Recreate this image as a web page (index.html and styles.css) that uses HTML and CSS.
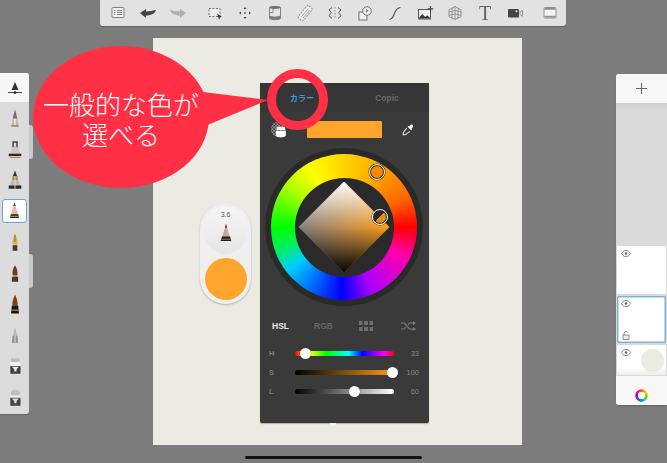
FILE: index.html
```html
<!DOCTYPE html>
<html lang="ja">
<head>
<meta charset="utf-8">
<title>カラー</title>
<link rel="stylesheet" href="styles.css">
</head>
<body>
<div class="stage">
  <div class="paper"></div>

  <header class="topbar">
    <div class="tgroup">
      <svg class="ti" viewBox="0 0 20 20"><rect x="4" y="4.500" width="12" height="10" rx="1" fill="#f4f4f4" stroke="#777"/><path d="M6 7.500h1.500M6 9.500h1.500M6 11.500h1.500M9 7.500h5M9 9.500h5M9 11.500h5" stroke="#777"/></svg>
      <svg class="ti" viewBox="0 0 20 20"><path d="M2 10 8 6v2.500c3.500 0 6.500-.4 10-1.700-.8 3.600-4.500 5.700-10 5.800V15z" fill="#333"/></svg>
      <svg class="ti" viewBox="0 0 20 20"><path d="M18 10 12 6v2.500c-3.500 0-6.500-.4-10-1.700.8 3.600 4.500 5.700 10 5.800V15z" fill="#aaa"/></svg>
    </div>
    <div class="tgroup">
      <svg class="ti" viewBox="0 0 20 20"><rect x="4" y="5.500" width="11" height="8" fill="#eee" stroke="#666" stroke-dasharray="2 1.500"/><path d="M12 10.500l5 3.500-2.200.6-.6 2.400z" fill="#222"/></svg>
      <svg class="ti" viewBox="0 0 20 20"><path d="M10 4l1.500 2h-3zM10 16l1.500-2h-3zM4 10l2-1.500v3zM16 10l-2-1.500v3z" fill="#333"/><circle cx="10" cy="10" r=".9" fill="#555"/></svg>
      <svg class="ti" viewBox="0 0 20 20"><path d="M4.500 4.500h11v11c-3 1.700-8 1.700-11 0z" fill="#e4e4e4" stroke="#777"/><path d="M4.500 12.500c3 1.500 8 1.500 11 0v3c-3 1.700-8 1.700-11 0z" fill="#77706e"/><path d="M8 5v4.500H4.500" fill="#fff" stroke="#777"/><ellipse cx="10" cy="4.500" rx="5.500" ry="1.400" fill="#666"/></svg>
      <svg class="ti" viewBox="0 0 20 20"><rect x="7" y="2" width="6.500" height="16" rx="1.500" transform="rotate(40 10 10)" fill="#f2f2f2" stroke="#888" stroke-dasharray="2 1"/><path d="M6.500 13.500 13.500 5.500M8 15l7-8" stroke="#999"/></svg>
      <svg class="ti" viewBox="0 0 20 20"><path d="M10 4v12" stroke="#888" stroke-dasharray="1.500 1.500"/><path d="M7 4.500 4 7l2.300 2.800L4 12.800 7 15.500M13 4.500 16 7l-2.300 2.800 2.300 3 -3 2.700" fill="none" stroke="#444"/></svg>
      <svg class="ti" viewBox="0 0 20 20"><rect x="4" y="9" width="8" height="8" fill="#f2f2f2" stroke="#666"/><circle cx="12" cy="8" r="4.300" fill="#eee" stroke="#666"/><path d="M11 5.800l2.700 2-2.700 2z" fill="#777"/></svg>
      <svg class="ti" viewBox="0 0 20 20"><path d="M4.500 16.500C8 16 8.500 12.500 9.800 9.500 11 6.500 12.500 5 15.500 4.500" fill="none" stroke="#444" stroke-width="1.200"/></svg>
      <svg class="ti" viewBox="0 0 20 20"><rect x="3.500" y="6.500" width="12" height="9.500" fill="#f2f2f2" stroke="#444"/><path d="M3.500 15.500l3.700-4.500 3 3 2-1.800 3.300 3.300z" fill="#222"/><path d="M15.500 3v5.500M12.800 5.800h5.400" stroke="#333" stroke-width="1.200"/></svg>
      <svg class="ti" viewBox="0 0 20 20"><path d="M10 3.500 4 6.800v6.900L10 16.500l6-2.800V6.800z" fill="#e8e8e8" stroke="#888"/><path d="M7 5.200v10M10 3.500v13M13 5.200v10M4 9 10 7.500l6 1.500M4 12.300 10 11l6 1.300" fill="none" stroke="#777" stroke-width=".8"/></svg>
      <span class="ti ti-t">T</span>
      <svg class="ti" viewBox="0 0 20 20"><rect x="3" y="6" width="11" height="8.500" rx="1" fill="#333"/><circle cx="11.500" cy="8.200" r="1" fill="#eee"/><path d="M15 9l2.500-1.800v6L15 11.500z" fill="#f2f2f2" stroke="#777" stroke-width=".8"/></svg>
    </div>
    <div class="tgroup tlast">
      <svg class="ti" viewBox="0 0 20 20"><rect x="4" y="4.500" width="12" height="10.500" rx="1" fill="#f7f7f7" stroke="#888"/><path d="M4.500 5h11v1.800h-11zM4.500 12.700h11v1.800h-11z" fill="#888"/></svg>
    </div>
  </header>

  <aside class="tools">
    <div class="tool-top">
      <svg class="tool-s" viewBox="0 0 20 20"><path d="M10 4 13.500 12h-7z" fill="#333"/><path d="M3 14.500h14" stroke="#444"/><circle cx="10" cy="14.500" r="1.500" fill="#333"/></svg>
    </div>
    <div class="tool">
      <svg class="nib" viewBox="0 0 20 28"><path d="M10 3 7 15h6z" fill="#6f6f6f"/><path d="M7 15 5.500 24h9L13 15z" fill="#b9b9b9"/><path d="M10 15v9" stroke="#e8e8e8" stroke-width="2"/><path d="M5.500 23h9v2h-9z" fill="#b08a3e"/></svg>
    </div>
    <div class="tool">
      <svg class="nib" viewBox="0 0 20 28"><path d="M7.500 5h5v7h-5z" fill="none" stroke="#444" stroke-width="2"/><path d="M7 11h6l5 11H2z" fill="#c9c9c9"/><path d="M2 20h16v3H2z" fill="#2a2a2a"/><path d="M3 24h14v1.500H3z" fill="#b08a3e"/></svg>
    </div>
    <div class="tool">
      <svg class="nib" viewBox="0 0 20 28"><path d="M10 2 7 10h6z" fill="#333"/><path d="M7 9h6l1 7H6z" fill="#b08a3e"/><path d="M6 14h8l4 10H2z" fill="#bdbdbd"/><path d="M2 21h16v4H2z" fill="#2a2a2a"/><path d="M10 9v16" stroke="#e5e5e5"/></svg>
    </div>
    <div class="tool tool-on">
      <div class="tool-sel">
        <svg class="nib" viewBox="0 0 20 28"><path d="M10 3 5 20h10z" fill="#e8b9a8"/><path d="M10 3 8.500 8h3z" fill="#333"/><path d="M5 19h10l1 5H4z" fill="#222"/><path d="M4 21h12v1.500H4z" fill="#b08a3e"/></svg>
      </div>
    </div>
    <div class="tool">
      <svg class="nib" viewBox="0 0 20 28"><path d="M10 3 6.500 13 8 18h4l1.500-5z" fill="#d9b25c"/><path d="M10 5v9" stroke="#7a5a20"/><path d="M7 18h6v7H7z" fill="#3a3a3a"/></svg>
    </div>
    <div class="tool">
      <svg class="nib" viewBox="0 0 20 28"><path d="M10 4C7 8 6.500 13 7 17h6c.5-4 0-9-3-13z" fill="#6b3d20"/><path d="M7 17h6v2H7z" fill="#b08a3e"/><path d="M6 19h8v6H6z" fill="#3a3a3a"/></svg>
    </div>
    <div class="tool">
      <svg class="nib" viewBox="0 0 20 28"><path d="M10 2C7.500 7 6.500 12 6.500 16h7c0-4-1-9-3.500-14z" fill="#7a3d18"/><path d="M6 16h8l1 10H5z" fill="#161616"/><path d="M5.500 21h9v1.500h-9z" fill="#b08a3e"/></svg>
    </div>
    <div class="tool">
      <svg class="nib" viewBox="0 0 20 28"><path d="M10 4 7 15h6z" fill="#bbb"/><path d="M7 15h6l1 9H6z" fill="#8c8c8c"/><path d="M8.500 15h3v9h-3z" fill="#b4b4b4"/></svg>
    </div>
    <div class="tool">
      <svg class="nib" viewBox="0 0 20 28"><path d="M5 4h11v5H5z" fill="#bdbdbd"/><path d="M4 9h13v5H4z" fill="#f2f2f2"/><path d="M4 14h13v10H4z" fill="#3f3f3f"/><path d="M6 15h9l-3 3v3H9v-3z" fill="#eee"/></svg>
    </div>
    <div class="tool">
      <svg class="nib" viewBox="0 0 20 28"><path d="M5 7c2-3 9-3 11 0v5H5z" fill="#bdbdbd"/><path d="M4 12h13v3H4z" fill="#eee"/><path d="M4 15h13v10H4z" fill="#454545"/><path d="M6 16h9l-3 3v3H9v-3z" fill="#ddd"/></svg>
    </div>
  </aside>
  <div class="tab tab-a"></div>
  <div class="tab tab-b"></div>

  <div class="pill">
    <div class="pill-top">
      <span class="pill-size">3.6</span>
      <svg class="pill-nib" viewBox="0 0 18 22"><path d="M9 1 4.500 16h9z" fill="#c9a696"/><path d="M9 1 7.800 5h2.400z" fill="#333"/><path d="M4.500 15h9l1.500 5H3z" fill="#1e1e1e"/><path d="M3.500 17.500h11v1h-11z" fill="#a5853f"/></svg>
    </div>
    <div class="pill-colour"></div>
  </div>

  <section class="panel">
    <div class="tabs">
      <span class="tab-label tab-on">カラー</span>
      <span class="tab-label">Copic</span>
    </div>
    <div class="swatch-row">
      <svg class="opacity" viewBox="0 0 24 24">
        <defs><pattern id="chk" width="4" height="4" patternUnits="userSpaceOnUse"><rect width="4" height="4" fill="#3a3a3a"/><rect width="2" height="2" fill="#999"/><rect x="2" y="2" width="2" height="2" fill="#999"/></pattern></defs>
        <circle cx="10" cy="11" r="9" fill="url(#chk)"/>
        <path d="M8 8h10v4H8z" fill="#eee"/><path d="M7 13h12v6c-2 2.500-10 2.500-12 0z" fill="#fff"/>
      </svg>
      <div class="swatch"></div>
      <svg class="dropper" viewBox="0 0 16 16"><path d="M10.500 2.500c1-1 2.500-1 3 0s.5 1.800-.5 2.800l-1 1 .8.800-1.300 1.300-4-4 1.300-1.300.800.800z" fill="#fff"/><path d="M6.500 6 2.500 11v2.500H5L10 9.500" fill="none" stroke="#eee" stroke-width="1.200"/></svg>
    </div>
    <div class="wheel">
      <div class="ring">
        <div class="hole"><div class="diamond"></div></div>
      </div>
      <span class="handle handle-hue"></span>
      <span class="handle handle-sl"></span>
    </div>
    <div class="modes">
      <span class="mode mode-on">HSL</span>
      <span class="mode">RGB</span>
      <svg class="mode-i" viewBox="0 0 14 10"><path d="M0 0h3.500v4H0zM5 0h4v4H5zM10.500 0H14v4h-3.500zM0 6h3.500v4H0zM5 6h4v4H5zM10.500 6H14v4h-3.500z" fill="#6e6e6e"/></svg>
      <svg class="mode-i mode-i2" viewBox="0 0 15 10"><path d="M0 2h3.500l5 6H12M0 8h3.500l1.500-2M7 4l1.500-2H12" fill="none" stroke="#7a7a7a" stroke-width="1.200"/><path d="M12 0l3 2-3 2zM12 6l3 2-3 2z" fill="#7a7a7a"/></svg>
    </div>
    <div class="sliders">
      <div class="srow"><span class="slabel">H</span><div class="track track-h"><span class="thumb thumb-h"></span></div><span class="sval">33</span></div>
      <div class="srow"><span class="slabel">S</span><div class="track track-s"><span class="thumb thumb-s"></span></div><span class="sval">100</span></div>
      <div class="srow"><span class="slabel">L</span><div class="track track-l"><span class="thumb thumb-l"></span></div><span class="sval">60</span></div>
    </div>
  </section>
  <div class="panel-dot"></div>

  <aside class="layers">
    <div class="add"><svg class="plus" viewBox="0 0 13 13"><path d="M6.500 1v11M1 6.500h11" stroke="#666" stroke-width="1.100"/></svg></div>
    <div class="layers-empty"></div>
    <div class="layer layer-a"><svg class="eye" viewBox="0 0 10 7"><use href="#eye"/></svg></div>
    <div class="layer layer-b"><svg class="eye" viewBox="0 0 10 7"><use href="#eye"/></svg>
      <svg class="lock" viewBox="0 0 8 9"><path d="M2 4V2.500a2 2 0 0 1 3.800-.8" fill="none" stroke="#666" stroke-width=".8"/><rect x="1" y="4" width="6" height="4.500" fill="#eee" stroke="#666" stroke-width=".7"/></svg>
    </div>
    <div class="layer layer-c"><svg class="eye" viewBox="0 0 10 7"><use href="#eye"/></svg><span class="bg-dot"></span></div>
    <div class="colour-btn"><span class="colour-ring"></span></div>
  </aside>

  <svg class="defs" width="0" height="0"><defs><g id="eye"><path d="M.5 3.500C2 1 3.500.5 5 .5s3 .5 4.500 3C8 6 6.500 6.500 5 6.500S2 6 .5 3.500z" fill="none" stroke="#666" stroke-width=".8"/><circle cx="5" cy="3.500" r="1.300" fill="#666"/></g></defs></svg>

  <div class="callout">
    <svg class="callout-shape" viewBox="0 0 300 150">
      <ellipse cx="88" cy="71" rx="88" ry="71" fill="#ff3045"/>
      <path d="M170 46 235 54 172 80z" fill="#ff3045"/>
      <circle cx="264.500" cy="53.500" r="26" fill="none" stroke="#ff3045" stroke-width="9"/>
    </svg>
    <p class="callout-text">一般的な色が<br>選べる</p>
  </div>

  <div class="home"></div>
</div>
</body>
</html>
```

FILE: styles.css
```css
* { box-sizing: border-box; }
html, body { margin: 0; padding: 0; }
body { background: #7c7c7c; font-family: "Liberation Sans", "Noto Sans CJK JP", sans-serif; }
.stage { position: relative; width: 667px; height: 463px; overflow: hidden; background: #7c7c7c; }
.paper { position: absolute; left: 153px; top: 38px; width: 369px; height: 407px; background: #ebebe4; }

.topbar { position: absolute; left: 100px; top: 0; width: 466px; height: 26px; display: flex; align-items: center; padding-left: 8px; background: #e2e2e2; border-radius: 0 0 3px 3px; box-shadow: 0 1px 1px rgba(0,0,0,.2); }
.tgroup { display: flex; align-items: center; gap: 10px; }
.tgroup + .tgroup { margin-left: 17px; }
.tgroup.tlast { margin-left: 15px; }
.ti { width: 20px; height: 20px; flex: none; opacity: .9; }
.ti-t { font-family: "Liberation Serif", serif; font-size: 20px; line-height: 20px; text-align: center; color: #555; }

.tools { position: absolute; left: 0; top: 73px; width: 29px; height: 341px; display: flex; flex-direction: column; background: #dcdcdc; border-radius: 0 3px 3px 0; box-shadow: 0 1px 1px rgba(0,0,0,.2); overflow: hidden; }
.tool-top { height: 29px; flex: none; display: flex; align-items: center; justify-content: center; background: #f7f7f7; }
.tool-s { width: 20px; height: 20px; }
.tool { height: 31px; flex: none; display: flex; align-items: center; justify-content: center; }
.nib { width: 16px; height: 22px; display: block; }
.tool-on { padding: 0 2px; }
.tool-sel { width: 25px; height: 24px; display: flex; align-items: center; justify-content: center; background: #fff; border: 1px solid #6aa3e0; border-radius: 3px; }
.tool-sel .nib { width: 15px; height: 21px; }
.tab { position: absolute; left: 29px; width: 4px; height: 34px; background: #c9c9c9; border-radius: 0 3px 3px 0; }
.tab-a { top: 125px; }
.tab-b { top: 254px; }

.pill { position: absolute; left: 200px; top: 203px; width: 51px; height: 101px; display: flex; flex-direction: column; align-items: center; padding-top: 3px; gap: 3px; background: #efefef; border-radius: 26px; box-shadow: 0 1px 2px rgba(0,0,0,.25); }
.pill-top { width: 43px; height: 48px; flex: none; display: flex; flex-direction: column; align-items: center; padding-top: 5px; gap: 4px; background: linear-gradient(#f5f5f5, #e6e6e6); border-radius: 22px; }
.pill-size { font-size: 7px; line-height: 8px; color: #555; }
.pill-nib { width: 16px; height: 20px; }
.pill-colour { width: 42px; height: 42px; flex: none; margin-top: 1px; background: #ffa52e; border-radius: 50%; }

.panel { position: absolute; left: 260px; top: 83px; width: 169px; height: 340px; display: flex; flex-direction: column; background: #3a3a3a; border-radius: 2px; box-shadow: 0 1px 1px rgba(0,0,0,.25); }
.tabs { height: 29px; flex: none; display: grid; grid-template-columns: 84px 85px; align-items: center; background: #363636; }
.tab-label { text-align: center; font-size: 8px; font-weight: 700; color: #6a6a6a; }
.tab-label + .tab-label { font-size: 8.500px; padding-left: 1px; }
.tab-on { color: #4a90d9; }
.swatch-row { height: 17px; margin-top: 9px; flex: none; display: flex; align-items: center; padding-left: 10px; }
.opacity { width: 20px; height: 20px; flex: none; }
.swatch { width: 75px; height: 17px; margin-left: 17px; background: #ffa52e; border-radius: 1px; }
.dropper { width: 14px; height: 14px; margin-left: 19px; flex: none; }
.wheel { position: relative; width: 158px; height: 158px; margin: 10px 0 0 5px; flex: none; display: flex; align-items: center; justify-content: center; background: #2a2a2a; border-radius: 50%; }
.ring { width: 146px; height: 146px; display: flex; align-items: center; justify-content: center; border-radius: 50%; background: conic-gradient(from 90deg, #f00 0deg, #f0a 25deg, #a0f 67deg, #00f 92deg, #0cf 142deg, #0e6 160deg, #0f0 180deg, #af0 215deg, #ff0 240deg, #fa0 300deg, #f60 335deg, #f00 360deg); }
.hole { width: 99px; height: 99px; display: flex; align-items: center; justify-content: center; border-radius: 50%; background: #2a2a2a; }
.diamond { width: 91px; height: 91px; clip-path: polygon(50% 0, 100% 50%, 50% 100%, 0 50%); background: linear-gradient(to bottom, #fff 0, rgba(255,255,255,0) 50%, rgba(0,0,0,0) 50%, #000 100%), linear-gradient(to right, #808080, #ff9a1a); }
.handle { position: absolute; width: 16px; height: 16px; border: 1.500px solid #fff; border-radius: 50%; box-shadow: inset 0 0 0 1px #222, 0 0 0 .5px #222; }
.handle-hue { left: 104px; top: 16px; background: #ff8800; }
.handle-sl { left: 107px; top: 61px; background: linear-gradient(135deg, #2a2a2a 50%, #e09020 50%); }
.modes { height: 14px; margin-top: 13px; flex: none; display: flex; align-items: center; padding-left: 12px; }
.mode { font-size: 8.500px; font-weight: 700; color: #666; width: 18px; }
.mode-on { color: #e8e8e8; margin-right: 24px; }
.mode-i { width: 14px; height: 10px; flex: none; margin-left: 27px; }
.mode-i2 { width: 15px; margin-left: 28px; }
.sliders { margin-top: 14px; display: flex; flex-direction: column; gap: 7px; }
.srow { height: 12px; display: grid; grid-template-columns: 35px 99px 25px; align-items: center; font-size: 7.500px; color: #858585; }
.slabel { padding-left: 9px; font-weight: 700; color: #7a7a7a; }
.sval { text-align: right; }
.track { position: relative; height: 5px; border-radius: 3px; }
.track-h { background: linear-gradient(to right, #f00 0, #ff0 15%, #0f0 32%, #0ff 54%, #00f 68%, #f0f 90%, #f00 100%); }
.track-s { background: linear-gradient(to right, #000, #ff9a1a); }
.track-l { background: linear-gradient(to right, #000, #888 55%, #fff 100%); }
.thumb { position: absolute; top: -3px; width: 11px; height: 11px; background: #fff; border-radius: 50%; box-shadow: 0 0 1px rgba(0,0,0,.5); }
.thumb-h { left: 5px; }
.thumb-s { left: 92px; }
.thumb-l { left: 54px; }
.panel-dot { position: absolute; left: 330px; top: 423px; width: 6px; height: 3px; background: #f4f4f0; border-radius: 0 0 3px 3px; }

.layers { position: absolute; left: 616px; top: 74px; width: 51px; height: 331px; display: flex; flex-direction: column; background: #d9d9d9; border-radius: 3px 0 0 3px; box-shadow: 0 1px 1px rgba(0,0,0,.2); overflow: hidden; }
.add { height: 29px; flex: none; display: flex; align-items: center; justify-content: center; background: #f8f8f8; }
.plus { width: 13px; height: 13px; }
.layers-empty { height: 143px; flex: none; background: linear-gradient(#cfcfcf, #dadada 8px); }
.layer { position: relative; margin: 0 1px 2px; background: #fff; flex: none; }
.layer-a { height: 48px; border-radius: 1px; }
.layer-b { height: 47px; border: 1px solid #7ab4de; border-radius: 1px; box-shadow: inset 0 0 0 .5px #7ab4de; }
.layer-c { height: 30px; margin-bottom: 1px; background: linear-gradient(#fff 75%, #ededed); }
.eye { position: absolute; left: 4px; top: 4px; width: 10px; height: 7px; }
.layer-b .eye { left: 3px; top: 3px; }
.lock { position: absolute; left: 4px; top: 34px; width: 8px; height: 9px; }
.bg-dot { position: absolute; left: 24px; top: 4px; width: 23px; height: 23px; background: #ebebe4; border-radius: 50%; }
.colour-btn { height: 28px; flex: 1; display: flex; align-items: center; justify-content: center; padding-top: 10px; background: #f8f8f8; }
.colour-ring { width: 13px; height: 13px; border-radius: 50%; background: conic-gradient(#f60, #fc0, #6d0, #0cc, #06f, #a0f, #f06, #f60); -webkit-mask: radial-gradient(circle, transparent 3.5px, #000 4px); mask: radial-gradient(circle, transparent 3.5px, #000 4px); }

.defs { position: absolute; }
.callout { position: absolute; left: 33px; top: 46px; width: 300px; height: 150px; }
.callout-shape { position: absolute; left: 0; top: 0; width: 300px; height: 150px; }
.callout-text { position: absolute; left: 0; top: 43px; width: 176px; margin: 0; text-align: center; font-family: "Noto Sans CJK JP", sans-serif; font-weight: 300; font-size: 26px; line-height: 30px; color: #fff; }

.home { position: absolute; left: 245px; top: 456px; width: 177px; height: 3px; background: #111; border-radius: 2px; }
```
